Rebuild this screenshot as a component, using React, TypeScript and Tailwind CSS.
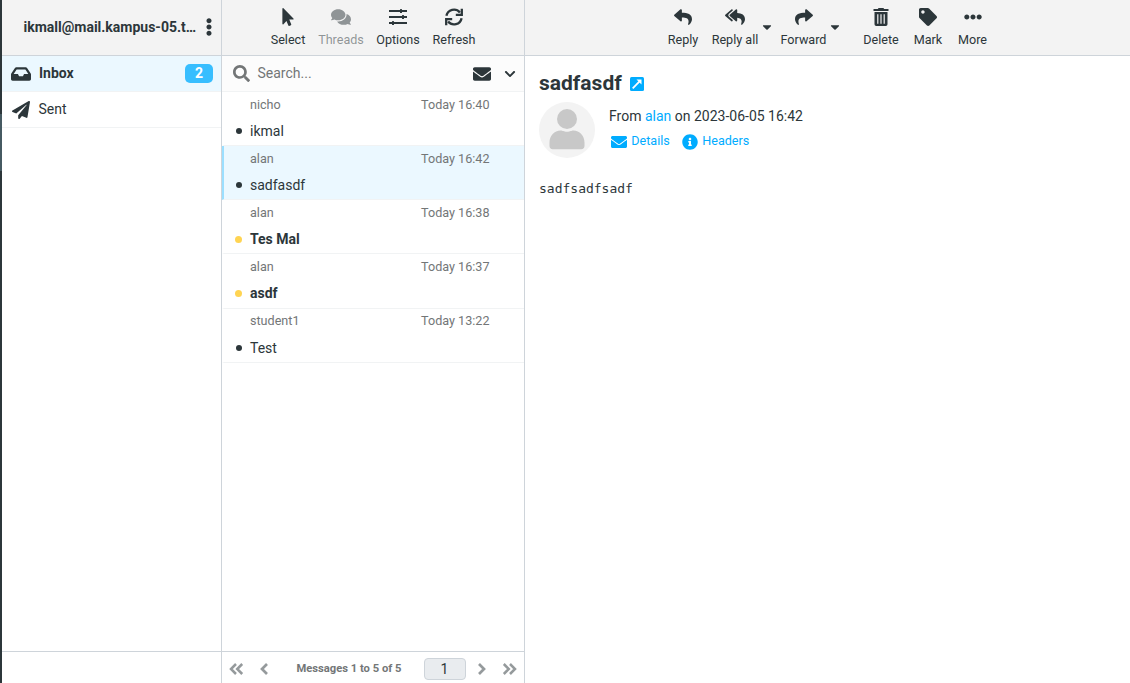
import type { ReactNode } from "react";
import { FaChevronDown, FaComments, FaEllipsisH, FaEllipsisV, FaEnvelope, FaInbox, FaInfoCircle, FaMousePointer, FaPaperPlane, FaReply, FaReplyAll, FaSearch, FaShare, FaTag, FaCaretDown } from "react-icons/fa";

function SlidersIcon() {
  return (
    <svg width="18" height="18" viewBox="0 0 18 18" fill="currentColor">
      <path d="M0 2h18v2H0zM0 8h18v2H0zM0 14h18v2H0z" />
      <rect x="11" y="0.9" width="2" height="4.2" rx="0.5" />
      <rect x="13" y="6.9" width="2" height="4.2" rx="0.5" />
      <rect x="3" y="12.9" width="2" height="4.2" rx="0.5" />
    </svg>
  );
}

function RefreshIcon() {
  return (
    <svg width="18" height="18" viewBox="0 0 18 18" fill="none" stroke="currentColor" strokeWidth="2.3">
      <path d="M1.4 7.8A7.7 7.7 0 0 1 14.9 4.4M16.6 10.2A7.7 7.7 0 0 1 3.1 13.6" />
      <path d="M16.8.8v6h-6M1.2 17.2v-6h6" />
    </svg>
  );
}

function TrashIcon() {
  return (
    <svg width="16" height="18" viewBox="0 0 16 18" fill="currentColor" fillRule="evenodd">
      <path d="M.5 1h4.3l.8-1h4.8l.8 1h4.3v2H.5zM1.5 4h13v12.3a1.7 1.7 0 0 1-1.7 1.7H3.2a1.7 1.7 0 0 1-1.7-1.7zm2.7 2.2v9.5h1.2V6.2zm3.2 0v9.5h1.2V6.2zm3.2 0v9.5h1.2V6.2z" />
    </svg>
  );
}

function ToolButton({ label, width, muted, children }: { label: string; width: string; muted?: boolean; children: ReactNode }) {
  return (
    <button className={`${width} flex h-[55px] shrink-0 flex-col items-center pt-[7px] text-[12.6px] ${muted ? "text-[#2c363a]/50" : "text-[#2c363a]"}`}>
      <span className="flex h-5 items-center">{children}</span>
      <span className="mt-1 leading-[17px] whitespace-nowrap">{label}</span>
    </button>
  );
}

const messages = [
  { from: "nicho", date: "Today 16:40", subject: "ikmal" },
  { from: "alan", date: "Today 16:42", subject: "sadfasdf", selected: true },
  { from: "alan", date: "Today 16:38", subject: "Tes Mal", unread: true },
  { from: "alan", date: "Today 16:37", subject: "asdf", unread: true },
  { from: "student1", date: "Today 13:22", subject: "Test" },
];

function Sidebar() {
  return (
    <aside className="flex w-[220px] shrink-0 flex-col border-r border-[#ced4da]">
      <header className="flex h-14 items-center border-b border-[#ced4da] bg-[#f3f3f3] pb-px pl-[21.5px]">
        <span className="w-[173.5px] whitespace-nowrap text-[14px] leading-5 font-bold">ikmall@mail.kampus-05.t…</span>
        <FaEllipsisV className="ml-[3px]" size={18} />
      </header>
      <nav className="flex-1">
        <a className="flex h-9 items-center border-b border-[#f1f3f4] bg-[#ebf8ff] pl-[9px] font-bold">
          <FaInbox size={20} />
          <span className="ml-2 flex-1">Inbox</span>
          <span className="mr-2 flex h-[19px] w-7 items-center justify-center rounded-[5px] bg-[#37beff] text-white">2</span>
        </a>
        <a className="flex h-9 items-center border-b border-[#f1f3f4] pl-[10px]">
          <FaPaperPlane size={18} />
          <span className="ml-[8.5px]">Sent</span>
        </a>
      </nav>
      <footer className="h-8 border-t border-[#ced4da]" />
    </aside>
  );
}

function MessageList() {
  return (
    <section className="flex w-[303px] shrink-0 flex-col border-r border-[#ced4da]">
      <header className="flex h-14 border-b border-[#ced4da] bg-[#f3f3f3] pl-[42px]">
        <ToolButton label="Select" width="w-12"><FaMousePointer size={18} /></ToolButton>
        <ToolButton label="Threads" width="w-[58px]" muted><FaComments size={20} /></ToolButton>
        <ToolButton label="Options" width="w-14"><SlidersIcon /></ToolButton>
        <ToolButton label="Refresh" width="w-14"><RefreshIcon /></ToolButton>
      </header>
      <div className="flex h-9 items-center border-b border-[#f1f3f4] bg-[#fcfcfc] pl-[11px]">
        <FaSearch size={17} className="text-[#737677]" />
        <span className="ml-[7.5px] flex-1 text-[#737677]">Search...</span>
        <FaEnvelope size={18} />
        <FaChevronDown size={12} className="mr-2 ml-[13px]" />
      </div>
      <ul className="flex-1">
        {messages.map((m) => (
          <li key={m.subject} className={`flex h-[54.15px] flex-col border-b border-l-2 border-b-[#f1f3f4] pl-[11px] ${m.selected ? "border-l-[#9bdfff] bg-[#ebf8ff]" : "border-l-transparent"}`}>
            <div className="flex h-[26px] items-center justify-between pr-[34.5px] pl-[15px] text-[12.6px] text-[#737677]">
              <span>{m.from}</span>
              <span>{m.date}</span>
            </div>
            <div className="flex h-[27px] items-center">
              <span className={m.unread ? "-mt-px size-[7px] rounded-full bg-[#ffd452]" : "-mt-px ml-px size-[6px] rounded-full bg-[#2c363a]"} />
              <span className={m.unread ? "ml-2 font-bold" : "ml-2"}>{m.subject}</span>
            </div>
          </li>
        ))}
      </ul>
      <footer className="flex h-8 items-center border-t border-[#ced4da] pt-[3px] pl-[6.5px] text-[#2c363a]">
        <DoubleChevron />
        <Chevron className="ml-4" />
        <span className="ml-[28px] w-[127px] pt-px text-[11.2px] font-bold whitespace-nowrap text-[#737677]">Messages 1 to 5 of 5</span>
        <span className="flex h-[22px] w-[42px] items-center justify-center rounded-[4px] border border-[#ced4da] bg-[#e9ecef] text-[14px]">1</span>
        <Chevron className="ml-[11px] rotate-180" />
        <DoubleChevron className="ml-4 rotate-180" />
      </footer>
    </section>
  );
}

function Chevron({ className = "" }: { className?: string }) {
  return (
    <svg className={className} width="9" height="12" viewBox="0 0 9 12" fill="none" stroke="#959a9c" strokeWidth="2.7">
      <path d="M7 1 2 6l5 5" />
    </svg>
  );
}

function DoubleChevron({ className = "" }: { className?: string }) {
  return (
    <svg className={className} width="15" height="12" viewBox="0 0 15 12" fill="none" stroke="#959a9c" strokeWidth="2.5">
      <path d="M7 1 2 6l5 5M13.2 1l-5 5 5 5" />
    </svg>
  );
}

function MessageView() {
  return (
    <main className="flex min-w-0 flex-1 flex-col">
      <header className="flex h-14 border-b border-[#ced4da] bg-[#f3f3f3] pl-[135.5px]">
        <ToolButton label="Reply" width="w-[45px]"><FaReply size={18} /></ToolButton>
        <ToolButton label="Reply all" width="w-[59px]"><FaReplyAll size={20} /></ToolButton>
        <FaCaretDown size={14} className="mt-5 -ml-[5px]" />
        <ToolButton label="Forward" width="w-[60px]"><FaShare size={18} /></ToolButton>
        <FaCaretDown size={14} className="mt-5 -ml-[6px]" />
        <ToolButton label="Delete" width="ml-[14px] w-[51px]"><TrashIcon /></ToolButton>
        <ToolButton label="Mark" width="w-[43px]"><FaTag size={18} /></ToolButton>
        <ToolButton label="More" width="w-[46px]"><FaEllipsisH size={18} /></ToolButton>
      </header>
      <article className="pt-[14px] pl-[14px]">
        <h1 className="flex h-[26px] items-center text-[21px] leading-[26px] font-bold">
          sadfasdf
          <svg className="mt-[2px] ml-2" width="14" height="14" viewBox="0 0 14 14">
            <rect width="14" height="14" rx="1.5" fill="#00acff" />
            <path d="M2.7 11.3 9.8 4.2" stroke="white" strokeWidth="1.8" />
            <path d="M6.5 2.5h5v5z" fill="white" />
          </svg>
        </h1>
        <div className="mt-[6px] flex">
          <svg width="56" height="56" viewBox="0 0 56 56">
            <circle cx="28" cy="28" r="28" fill="#f3f3f3" />
            <g fill="#c8c8c8">
              <circle cx="28" cy="17" r="10" />
              <path d="M10.5 44v-3.5c0-7 5-12 11-12 2.5 0 3 1.2 6.5 1.2s4-1.2 6.5-1.2c6 0 11 5 11 12V44c0 2-1.2 3.2-3.2 3.2H13.7c-2 0-3.2-1.2-3.2-3.2z" />
            </g>
          </svg>
          <div className="ml-[14px] pt-1">
            <p className="leading-5">From <span className="text-[#00acff]">alan</span> on 2023-06-05 16:42</p>
            <div className="mt-[5px] flex h-5 items-center pl-[2px] text-[12.6px] text-[#00acff]">
              <FaEnvelope size={16} className="mt-[2px]" />
              <span className="ml-[4.3px]">Details</span>
              <FaInfoCircle size={16} className="mt-[2px] ml-[11.7px]" />
              <span className="ml-[4.7px]">Headers</span>
            </div>
          </div>
        </div>
        <pre className="mt-[21px] font-['DejaVu_Sans_Mono',monospace] text-[13px] leading-5">sadfsadfsadf</pre>
      </article>
    </main>
  );
}

export default function App() {
  return (
    <div className="flex h-[683px] w-full overflow-hidden bg-white font-[Roboto,sans-serif] text-[14px] text-[#2c363a]">
      <div className="flex w-[2px] shrink-0 flex-col bg-[#2c363a] pt-[114px]">
        <div className="h-[57px] bg-[#465a62]" />
      </div>
      <Sidebar />
      <MessageList />
      <MessageView />
    </div>
  );
}
